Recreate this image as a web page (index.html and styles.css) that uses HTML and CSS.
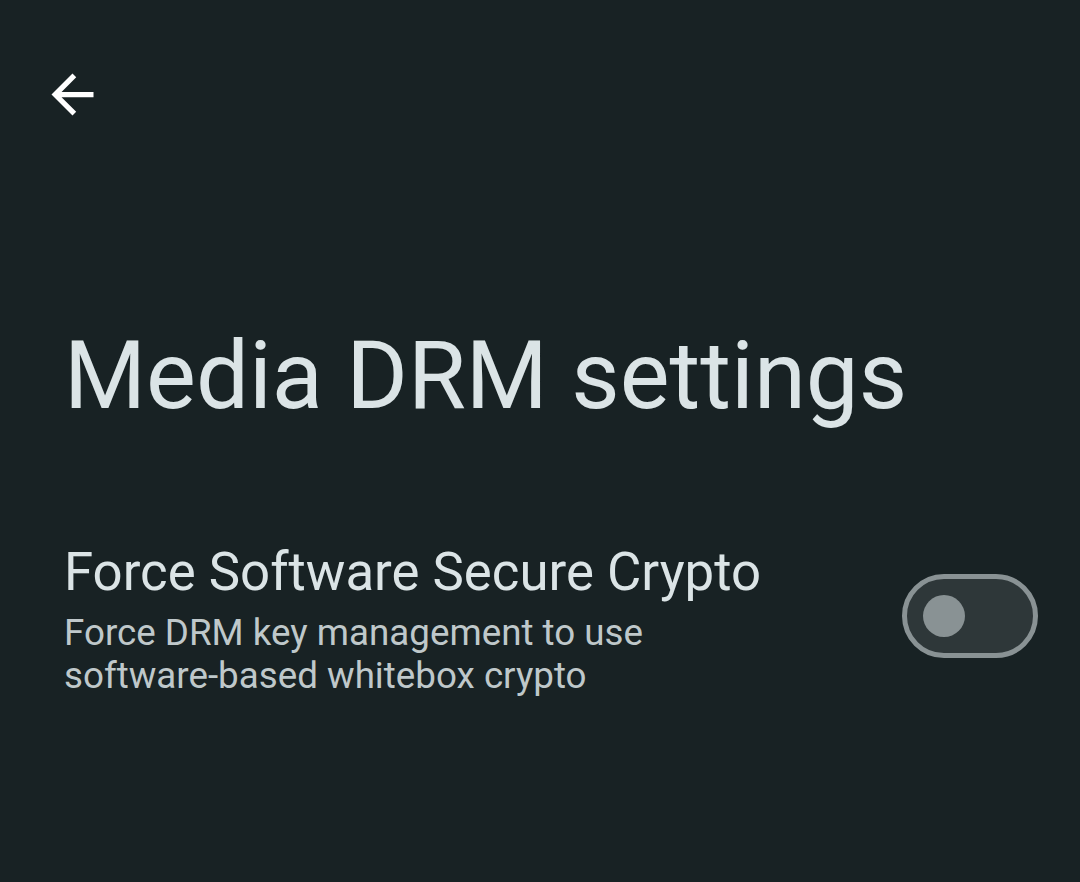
FILE: index.html
```html
<!DOCTYPE html>
<html lang="en">

<head>
    <meta charset="UTF-8">
    <meta name="viewport" content="width=device-width, initial-scale=1.0">
    <title>Media DRM settings</title>
    <link rel="stylesheet" href="styles.css">
</head>

<body>

    <div class="topbar">
        <button class="back-btn" aria-label="Back">
            <svg viewBox="0 0 24 24" width="63" height="63">
                <path d="M20 11H7.83l5.59-5.59L12 4l-8 8 8 8 1.41-1.41L7.83 13H20v-2z" fill="#ffffff"/>
            </svg>
        </button>
    </div>

    <h1 class="title">Media DRM settings</h1>

    <div class="pref-item">
        <div class="pref-text">
            <div class="pref-title">Force Software Secure Crypto</div>
            <div class="pref-summary">Force DRM key management to use<br>software-based whitebox crypto</div>
        </div>
        <div class="switch">
            <div class="switch-thumb"></div>
        </div>
    </div>

</body>

</html>
```

FILE: styles.css
```css
body {
    font-family: Roboto, "Noto Sans", sans-serif;
    background-color: #182224;
    color: #dbe4e6;
    margin: 0;
    height: 100vh;
}

.topbar {
    height: 63px;
    padding-top: 63px;
    padding-left: 41px;
}

.back-btn {
    background: none;
    border: none;
    padding: 0;
    display: block;
    cursor: pointer;
}

.back-btn svg {
    display: block;
}

.title {
    font-size: 94px;
    font-weight: 400;
    line-height: 94px;
    margin: 203px 0 0 64px;
}

.pref-item {
    display: flex;
    align-items: center;
    justify-content: space-between;
    margin-top: 118px;
    padding: 0 42px 0 64px;
}

.pref-title {
    font-size: 52.75px;
    line-height: 62px;
    color: #dbe4e6;
}

.pref-summary {
    font-size: 36.75px;
    line-height: 43px;
    margin-top: 8px;
    color: #bfc8ca;
}

.switch {
    height: 74px;
    width: 110px;
    border: 5px solid #899294;
    border-radius: 42px;
    background-color: #2e3739;
    display: flex;
    align-items: center;
    padding-left: 16px;
    margin-bottom: 6px;
}

.switch-thumb {
    width: 42px;
    height: 42px;
    border-radius: 50%;
    background-color: #899294;
}
```
